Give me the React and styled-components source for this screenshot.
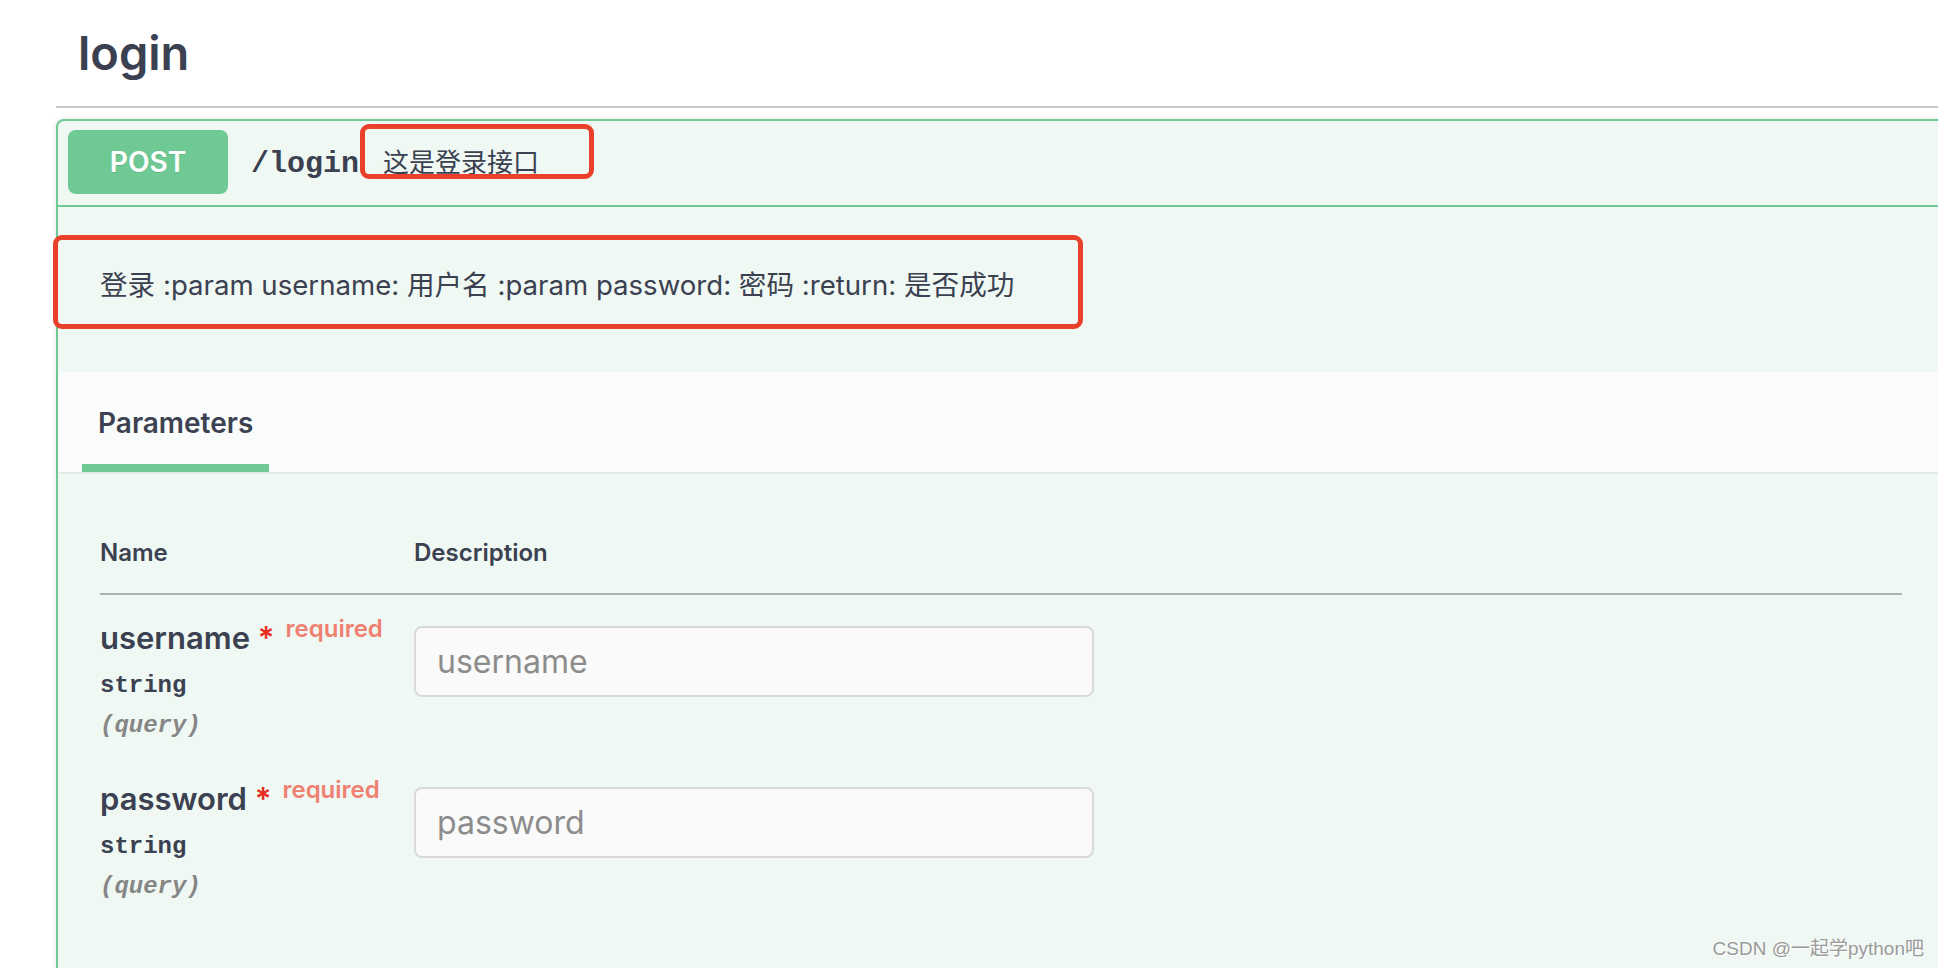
import styled, { createGlobalStyle } from "styled-components"

const sans = `Inter, "Noto Sans CJK SC", sans-serif`
const mono = `"Liberation Mono", "Courier New", monospace`
const green = "#6fc994"

const GlobalStyle = createGlobalStyle`
  html, body {
    margin: 0;
    padding: 0;
    background: #fff;
    overflow: hidden;
  }
  body {
    font-family: ${sans};
    color: #3b4151;
  }
`

const Page = styled.div`
  position: relative;
  height: 100vh;
  overflow: hidden;
`

const TagSection = styled.div`
  margin-left: 56px;
  width: 1890px;
`

const TagTitle = styled.h3`
  margin: 0;
  padding: 24px 0 24px 22px;
  font: 600 47px/58px ${sans};
  color: #3b4151;
  border-bottom: 2px solid #c6c7ca;
`

const Opblock = styled.div`
  margin-top: 11px;
  border: 2px solid ${green};
  border-radius: 8px;
  background: #eff8f3;
  box-shadow: 0 0 6px rgba(0, 0, 0, 0.1);
`

const Summary = styled.div`
  display: flex;
  align-items: center;
  padding: 9px 10px 11px;
  border-bottom: 2px solid ${green};
`

const Method = styled.span`
  display: flex;
  align-items: center;
  justify-content: center;
  width: 160px;
  height: 64px;
  border-radius: 8px;
  background: ${green};
  color: #fff;
  font: 600 28px ${sans};
  text-shadow: 0 1px 0 rgba(0, 0, 0, 0.1);
`

const Path = styled.span`
  margin-left: 23px;
  padding-top: 4px;
  font: 700 30px ${mono};
  color: #3b4151;
`

const SummaryText = styled.span`
  position: relative;
  margin-left: 24px;
  font: 400 26px/37px ${sans};
  color: #3b4151;
`

// red annotation frames drawn over the screenshot
const Mark = styled.span`
  position: absolute;
  box-sizing: border-box;
  top: ${(p) => p.$top}px;
  left: ${(p) => p.$left}px;
  width: ${(p) => p.$w}px;
  height: ${(p) => p.$h}px;
  border: 5px solid #e8402a;
  border-radius: 9px;
  pointer-events: none;
`

const Description = styled.div`
  padding: 58px 42px 67px;
`

const DescText = styled.p`
  position: relative;
  margin: 0;
  font: 400 27.6px/40px ${sans};
  color: #3b4151;
`

const TabHeader = styled.div`
  display: flex;
  height: 100px;
  padding-left: 24px;
  background: #fafcfb;
  box-shadow: 0 1px 2px rgba(0, 0, 0, 0.1);
`

const TabItem = styled.div`
  box-sizing: border-box;
  height: 100%;
  padding: 34px 16px 0;
  border-bottom: 8px solid ${green};
  font: 600 28px/34px ${sans};
  color: #3b4151;
`

const ParamsBody = styled.div`
  padding: 66px 42px 140px;
`

const HeadRow = styled.div`
  display: grid;
  grid-template-columns: 314px 1fr;
  padding-bottom: 25px;
  border-bottom: 2px solid #abb2b2;
  font: 600 24px/30px ${sans};
  color: #3b4151;
`

const ParamRow = styled.div`
  display: grid;
  grid-template-columns: 314px 1fr;
  padding: 24px 0 15px;
`

const ParamName = styled.div`
  font: 600 31px/38px ${sans};
  color: #3b4151;
  white-space: nowrap;
`

const Star = styled.span`
  color: #e62d1f;
`

const Required = styled.span`
  padding-left: 11px;
  vertical-align: 12px;
  font: 600 24px/20px ${sans};
  color: #ef8072;
`

const ParamType = styled.div`
  margin-top: 14px;
  font: 700 24px/30px ${mono};
  color: #3b4151;
`

const ParamIn = styled.div`
  margin-top: 10px;
  font: italic 700 24px/30px ${mono};
  color: #868686;
`

const Input = styled.input`
  display: block;
  box-sizing: border-box;
  width: 680px;
  height: 71px;
  margin-top: 7px;
  padding: 0 21px;
  border: 2px solid #dadada;
  border-radius: 8px;
  background: #fafafa;
  font: 400 32px ${sans};
  color: #3b4151;
  outline: none;
  &::placeholder {
    color: #8c8c8c;
  }
`

const Watermark = styled.div`
  position: absolute;
  right: 14px;
  bottom: 8px;
  font: 400 19px "Liberation Sans", "Noto Sans CJK SC", sans-serif;
  color: #9a9a9a;
  text-shadow: 1px 1px 0 #fff;
`

const params = [
  { name: "username" },
  { name: "password" },
]

export default function App() {
  return (
    <Page>
      <GlobalStyle />
      <TagSection>
        <TagTitle>login</TagTitle>
        <Opblock>
          <Summary>
            <Method>POST</Method>
            <Path>/login</Path>
            <SummaryText>
              这是登录接口
              <Mark $top={-20} $left={-23} $w={234} $h={55} />
            </SummaryText>
          </Summary>

          <Description>
            <DescText>
              登录 :param username: 用户名 :param password: 密码 :return: 是否成功
              <Mark $top={-30} $left={-47} $w={1030} $h={94} />
            </DescText>
          </Description>

          <TabHeader>
            <TabItem>Parameters</TabItem>
          </TabHeader>

          <ParamsBody>
            <HeadRow>
              <div>Name</div>
              <div>Description</div>
            </HeadRow>
            {params.map((p) => (
              <ParamRow key={p.name}>
                <div>
                  <ParamName>
                    {p.name} <Star>*</Star>
                    <Required>required</Required>
                  </ParamName>
                  <ParamType>string</ParamType>
                  <ParamIn>(query)</ParamIn>
                </div>
                <div>
                  <Input placeholder={p.name} />
                </div>
              </ParamRow>
            ))}
          </ParamsBody>
        </Opblock>
      </TagSection>
      <Watermark>CSDN @一起学python吧</Watermark>
    </Page>
  )
}
